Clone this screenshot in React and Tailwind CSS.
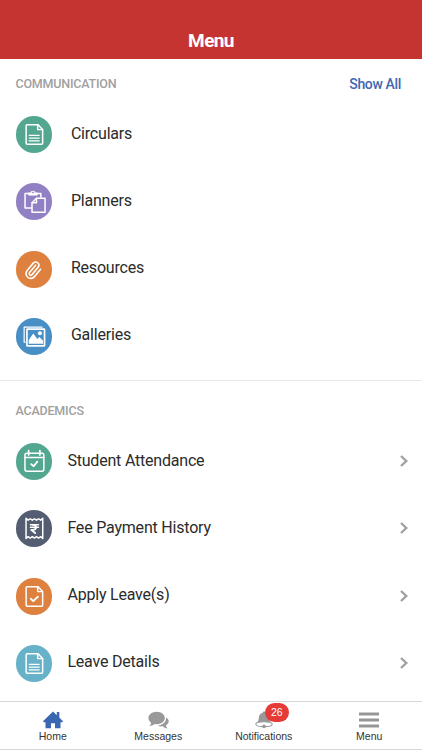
function DocIcon() {
  return (
    <g>
      <path d="M22 8.7H11.3Q10.2 8.7 10.2 9.8V27.2Q10.2 28.3 11.3 28.3H25.7Q26.8 28.3 26.8 27.2V13.5Z" />
      <path d="M21.8 9V13.7H26.6" />
      <path d="M13.3 19.4H23.3M13.3 22.2H23.3M13.3 25H23.3" strokeWidth="1.3" />
    </g>
  );
}

function PlannerIcon() {
  return (
    <g>
      <path d="M13 10.6H9.1V25.2H15.5M21.5 10.6H25V14.2" />
      <path d="M12.8 9.8H15.3V8.3H18.8V9.8H21.4V12.2H12.8Z" fill="white" strokeWidth="0.6" />
      <rect x="16.3" y="9" width="1.5" height="1.3" fill="#9180c4" stroke="none" />
      <path d="M20.6 15.4H29.2V29.3H16.1V19.8Z" />
      <path d="M20.6 15.6V19.8H16.3" />
    </g>
  );
}

function ClipIcon() {
  return (
    <g transform="translate(7.6 9.5) rotate(-5 12 12) scale(0.8)">
      <path
        d="m16 6-8.414 8.586a2 2 0 0 0 2.829 2.829l8.414-8.586a4 4 0 1 0-5.657-5.657l-8.379 8.551a6 6 0 1 0 8.485 8.485l8.379-8.551"
        strokeWidth="2"
      />
    </g>
  );
}

function GalleryIcon() {
  return (
    <g>
      <path d="M8.2 24V9.1H26.3" strokeWidth="1.2" />
      <path d="M8.1 24.3H9.5" strokeWidth="1" />
      <rect x="11" y="11.2" width="17.7" height="16.8" rx="0.4" strokeWidth="1.7" />
      <path d="M12.8 25.8V22L17.4 15.6L21.4 21L23.5 19.2L27.2 23V25.8Z" fill="white" stroke="none" />
      <circle cx="24.1" cy="15.3" r="2" fill="white" stroke="none" />
    </g>
  );
}

function CalendarIcon() {
  return (
    <g>
      <rect x="9" y="10.4" width="19" height="17.9" rx="1.8" />
      <path d="M9 14.7H28" />
      <path d="M12.7 7.7V12M24 7.7V12" strokeWidth="1.8" />
      <path d="M15.3 21.2L17.8 23.4L21.4 18.7" strokeWidth="1.8" />
    </g>
  );
}

function ReceiptIcon() {
  return (
    <g>
      <path
        d="M10.1 8.3L12.2 10.2L14.3 8.8L16.4 10.2L18.5 8.8L20.6 10.2L22.7 8.8L24.8 10.2L26.9 8.3V28.7L24.8 26.8L22.7 28.2L20.6 26.8L18.5 28.2L16.4 26.8L14.3 28.2L12.2 26.8L10.1 28.7Z"
        strokeWidth="1.5"
      />
      <path d="M14.5 14.9H22.6M14.5 17.4H22.6" strokeWidth="1.5" />
      <path d="M17 14.9C21.2 14.9 21.2 20 17 20H15.3L19.3 23.2" strokeWidth="1.8" />
    </g>
  );
}

function LeaveIcon() {
  return (
    <g>
      <path d="M22 8.7H11.3Q10.2 8.7 10.2 9.8V27.2Q10.2 28.3 11.3 28.3H25.7Q26.8 28.3 26.8 27.2V13.5Z" />
      <path d="M21.8 9V13.7H26.6" />
      <path d="M14.8 20.8L17.3 23.2L22 18.8" strokeWidth="1.9" />
    </g>
  );
}

const communication = [
  { label: "Circulars", color: "bg-[#53a791]", Icon: DocIcon },
  { label: "Planners", color: "bg-[#9180c4]", Icon: PlannerIcon },
  { label: "Resources", color: "bg-[#de803e]", Icon: ClipIcon },
  { label: "Galleries", color: "bg-[#478fc4]", Icon: GalleryIcon },
];

const academics = [
  { label: "Student Attendance", color: "bg-[#53a791]", Icon: CalendarIcon },
  { label: "Fee Payment History", color: "bg-[#545d72]", Icon: ReceiptIcon },
  { label: "Apply Leave(s)", color: "bg-[#de803e]", Icon: LeaveIcon },
  { label: "Leave Details", color: "bg-[#67b1c9]", Icon: DocIcon },
];

function MenuRow({ item, arrow }) {
  const { label, color, Icon } = item;
  return (
    <li className="flex h-[67.25px] items-center pl-[15.6px] pr-[14px]">
      <span className={`h-[36.8px] w-[36.8px] shrink-0 rounded-full ${color}`}>
        <svg
          viewBox="0 0 37 37"
          className="h-full w-full"
          fill="none"
          stroke="white"
          strokeWidth="1.5"
          strokeLinecap="round"
          strokeLinejoin="round"
        >
          <Icon />
        </svg>
      </span>
      <span
        className={`${arrow ? "ml-[15px]" : "ml-[18.5px]"} pb-[2px] text-base font-normal tracking-[-0.2px] text-[#2b2b2b]`}
      >
        {label}
      </span>
      {arrow && (
        <svg
          viewBox="0 0 8 12"
          className="mb-px ml-auto h-[12px] w-[8px]"
          fill="none"
          stroke="#a0a0a0"
          strokeWidth="2.4"
        >
          <path d="M1 1L6.3 6L1 11" />
        </svg>
      )}
    </li>
  );
}

function TabItem({ label, children }) {
  return (
    <button className="flex flex-1 flex-col items-center pt-[8px]">
      <span className="relative flex h-[20px] items-center justify-center">
        {children}
      </span>
      <span className="font-['Liberation_Sans',sans-serif] text-[10.5px] leading-[13px] text-[#333]">
        {label}
      </span>
    </button>
  );
}

export default function App() {
  return (
    <div className="flex h-[750px] w-[422px] flex-col overflow-hidden bg-white font-['Roboto',sans-serif] font-medium">
      <header className="flex h-[59px] shrink-0 items-end justify-center bg-[#c63431] pb-[7px]">
        <h1 className="text-[19px] font-bold leading-[22px] tracking-[-0.6px] text-white">Menu</h1>
      </header>

      <section className="h-[322px] shrink-0 border-b border-[#e8e8e8]">
        <div className="flex h-[42px] items-center justify-between pl-[15.5px] pr-[21px] pt-[8px]">
          <h2 className="text-[12.5px] tracking-[-0.2px] text-[#a0a0a0]">COMMUNICATION</h2>
          <a className="text-[14px] tracking-[-0.35px] text-[#4267b2]">Show All</a>
        </div>
        <ul>
          {communication.map((item) => (
            <MenuRow key={item.label} item={item} />
          ))}
        </ul>
      </section>

      <section className="h-[320px] shrink-0">
        <div className="flex h-[47px] items-center pl-[15.5px] pt-[13px]">
          <h2 className="text-[12.5px] tracking-[-0.2px] text-[#a0a0a0]">ACADEMICS</h2>
        </div>
        <ul>
          {academics.map((item) => (
            <MenuRow key={item.label} item={item} arrow />
          ))}
        </ul>
      </section>

      <nav className="flex h-[49px] shrink-0 border-b border-t border-[#d6d6d6] bg-white">
        <TabItem label="Home">
          <svg viewBox="0 0 20 18" className="h-[18px] w-[20px]" fill="#3a66b2">
            <path d="M10 0.5L0 10.2L0.8 11.2H2.5V16.7Q2.5 17.3 3.1 17.3H8V12.2H12V17.3H16.9Q17.5 17.3 17.5 16.7V11.2H19.2L20 10.2L16.3 6.4V1H13.8V4.2Z" />
          </svg>
        </TabItem>
        <TabItem label="Messages">
          <svg viewBox="0 0 21 18" className="h-[18px] w-[21px]" fill="#999">
            <path d="M8.7 0.7C13.2 0.7 16.8 3.5 16.8 7S13.2 13.2 8.7 13.2C7.9 13.2 7.2 13.1 6.5 13C5 14.4 3.2 14.9 1.3 15C2.4 14 3.1 12.9 3.1 11.7C1.5 10.5 0.4 8.9 0.4 7C0.4 3.5 4.2 0.7 8.7 0.7Z" />
            <path d="M18.2 6.5C19.8 7.5 20.7 8.8 20.7 10.3C20.7 12 19.6 13.4 18 14.3C18 15.4 18.7 16.4 19.7 17.5C17.8 17.4 16.1 16.7 14.8 15.3C13 15.6 11.2 15.3 9.8 14.5C14.6 14.3 18.3 11 18.2 6.5Z" />
          </svg>
        </TabItem>
        <TabItem label="Notifications">
          <svg viewBox="0 0 18 18" className="h-[18px] w-[18px]" fill="#999">
            <path d="M9 0.5C9.8 0.5 10.3 1 10.3 1.8C13 2.5 14.2 4.4 14.2 7C14.2 9.5 15.4 11 17.3 12.8H0.7C2.6 11 3.8 9.5 3.8 7C3.8 4.4 5 2.5 7.7 1.8C7.7 1 8.2 0.5 9 0.5Z" />
            <ellipse cx="9" cy="13.2" rx="8.2" ry="2.4" fill="white" stroke="#999" strokeWidth="1.1" />
            <circle cx="9" cy="15.4" r="1.8" />
          </svg>
          <span className="absolute left-[10px] top-[-7px] flex h-[19px] w-[24px] items-center justify-center rounded-full bg-[#e53a35] font-['Liberation_Sans',sans-serif] text-[10.5px] text-white">
            26
          </span>
        </TabItem>
        <TabItem label="Menu">
          <svg viewBox="0 0 20 16" className="h-[16px] w-[20px]" fill="#969696">
            <path d="M0 0.5H20V3.5H0ZM0 6.5H20V9.5H0ZM0 12.5H20V15.5H0Z" />
          </svg>
        </TabItem>
      </nav>
    </div>
  );
}
